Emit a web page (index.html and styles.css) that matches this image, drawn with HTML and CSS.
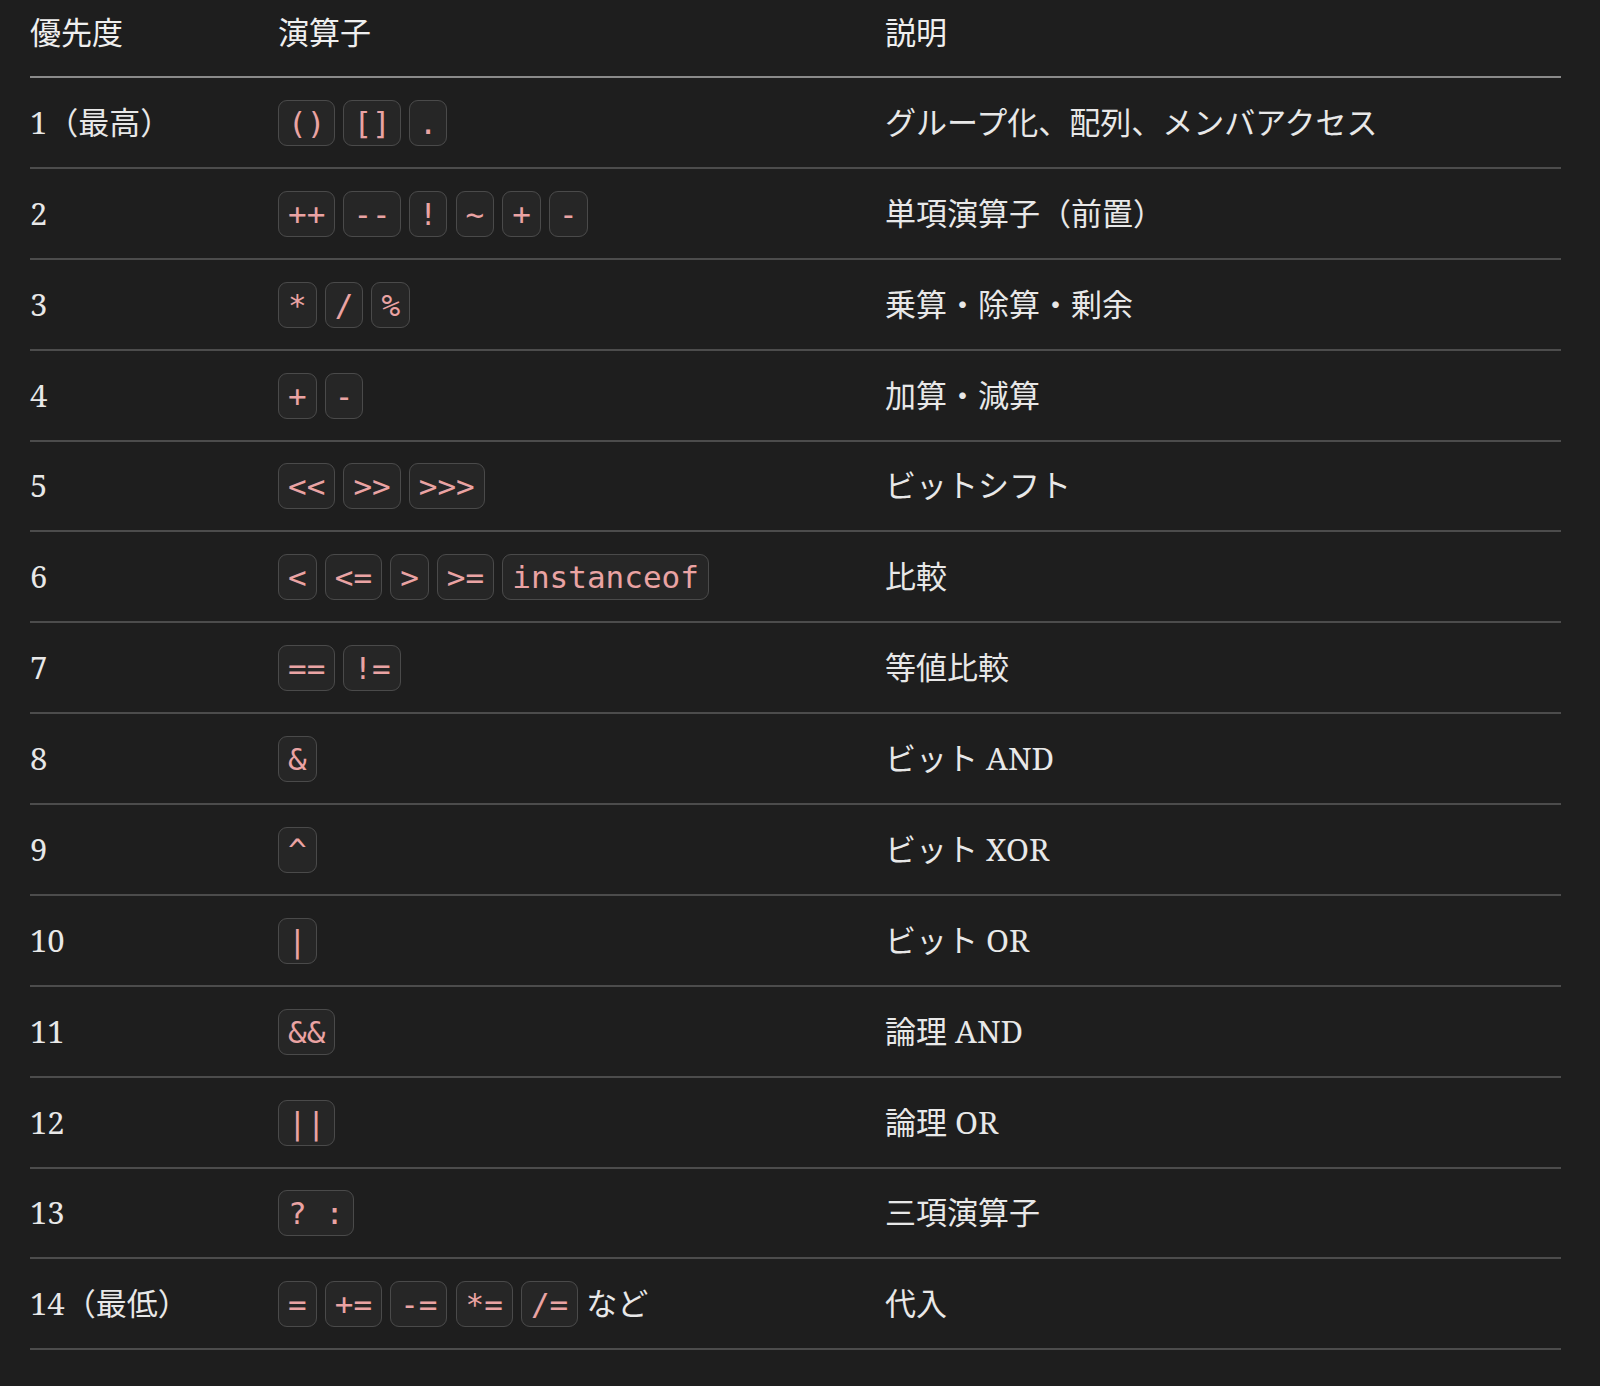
FILE: index.html
```html
<!DOCTYPE html>
<html lang="ja">
<head>
<meta charset="utf-8">
<title>演算子の優先順位</title>
<link rel="stylesheet" href="styles.css">
</head>
<body>
<div class="page">
<table class="ops">
  <colgroup>
    <col class="c-prio">
    <col class="c-op">
    <col class="c-desc">
  </colgroup>
  <thead>
    <tr><th>優先度</th><th>演算子</th><th>説明</th></tr>
  </thead>
  <tbody>
    <tr><td>1（最高）</td><td><code>()</code> <code>[]</code> <code>.</code></td><td>グループ化、配列、メンバアクセス</td></tr>
    <tr><td>2</td><td><code>++</code> <code>--</code> <code>!</code> <code>~</code> <code>+</code> <code>-</code></td><td>単項演算子（前置）</td></tr>
    <tr><td>3</td><td><code>*</code> <code>/</code> <code>%</code></td><td>乗算・除算・剰余</td></tr>
    <tr><td>4</td><td><code>+</code> <code>-</code></td><td>加算・減算</td></tr>
    <tr><td>5</td><td><code>&lt;&lt;</code> <code>&gt;&gt;</code> <code>&gt;&gt;&gt;</code></td><td>ビットシフト</td></tr>
    <tr><td>6</td><td><code>&lt;</code> <code>&lt;=</code> <code>&gt;</code> <code>&gt;=</code> <code>instanceof</code></td><td>比較</td></tr>
    <tr><td>7</td><td><code>==</code> <code>!=</code></td><td>等値比較</td></tr>
    <tr><td>8</td><td><code>&amp;</code></td><td>ビット AND</td></tr>
    <tr><td>9</td><td><code>^</code></td><td>ビット XOR</td></tr>
    <tr><td>10</td><td><code>|</code></td><td>ビット OR</td></tr>
    <tr><td>11</td><td><code>&amp;&amp;</code></td><td>論理 AND</td></tr>
    <tr><td>12</td><td><code>||</code></td><td>論理 OR</td></tr>
    <tr><td>13</td><td><code>? :</code></td><td>三項演算子</td></tr>
    <tr><td>14（最低）</td><td><code>=</code> <code>+=</code> <code>-=</code> <code>*=</code> <code>/=</code> など</td><td>代入</td></tr>
  </tbody>
</table>
</div>
</body>
</html>
```

FILE: styles.css
```css
html, body {
  margin: 0;
  padding: 0;
  background: #1e1e1e;
}

.page {
  padding: 0 39px 0 30px;
}

.ops {
  width: 100%;
  border-collapse: collapse;
  table-layout: fixed;
  font-family: "Noto Serif", "Liberation Serif", "Noto Sans CJK JP", serif;
  font-size: 31px;
  color: #e8e8e8;
}

.c-prio { width: 248px; }
.c-op { width: 607px; }

.ops th {
  text-align: left;
  font-weight: normal;
  color: #efefef;
  line-height: 45px;
  padding: 9.5px 0 21.5px;
  border-bottom: 2px solid #8a8a8a;
}

.ops td {
  line-height: 45px;
  height: 45px;
  padding: 21.95px 0;
  border-bottom: 2px solid #4c4c4c;
  white-space: nowrap;
}

.ops code {
  font-family: "DejaVu Sans Mono", monospace;
  font-size: 31px;
  line-height: 1;
  color: #eaa3a3;
  background: #262626;
  border: 1px solid #4a4a4a;
  border-radius: 9px;
  padding: 4px 9px;
}
```
